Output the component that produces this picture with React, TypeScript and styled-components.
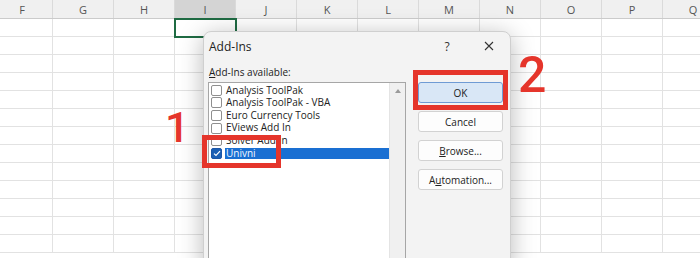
import React from 'react';
import styled, { createGlobalStyle } from 'styled-components';

const GlobalStyle = createGlobalStyle`
  html, body {
    margin: 0;
    padding: 0;
    background: #ffffff;
    overflow: hidden;
  }
  body {
    font-family: 'Open Sans', 'Noto Sans', sans-serif;
  }
`;

const COLUMNS = ['F', 'G', 'H', 'I', 'J', 'K', 'L', 'M', 'N', 'O', 'P', 'Q'];
const ROW_COUNT = 13;
const ADDINS = [
  { name: 'Analysis ToolPak', checked: false },
  { name: 'Analysis ToolPak - VBA', checked: false },
  { name: 'Euro Currency Tools', checked: false },
  { name: 'EViews Add In', checked: false },
  { name: 'Solver Add-in', checked: false },
  { name: 'Univni', checked: true },
];

const Page = styled.div`
  position: relative;
  width: 700px;
  height: 258px;
  overflow: hidden;
  background: #ffffff;
`;

const Sheet = styled.div`
  margin-left: -8px;
  display: flex;
  flex-direction: column;
`;

const HeaderRow = styled.div`
  display: flex;
  height: 19px;
  background: #f0f0f0;
  border-bottom: 1px solid #cbcbcb;
  box-sizing: border-box;
`;

const HeaderCell = styled.div<{ $active?: boolean }>`
  width: 61px;
  flex: none;
  box-sizing: border-box;
  border-right: 1px solid #dadada;
  background: ${(p) => (p.$active ? '#d4d4d4' : 'transparent')};
  display: flex;
  align-items: center;
  justify-content: center;
  font-family: 'Open Sans', sans-serif;
  font-size: 11px;
  color: #555555;
`;

const Row = styled.div`
  display: flex;
  height: 18px;
`;

const Cell = styled.div`
  width: 61px;
  flex: none;
  box-sizing: border-box;
  border-right: 1px solid #e2e2e2;
  border-bottom: 1px solid #e2e2e2;
`;

const SelectedCell = styled.div`
  position: absolute;
  left: 174px;
  top: 18px;
  width: 63px;
  height: 20px;
  box-sizing: border-box;
  border: 2px solid #1f6b43;
`;

const Dialog = styled.div`
  position: absolute;
  left: 203px;
  top: 31px;
  width: 308px;
  height: 240px;
  box-sizing: border-box;
  background: #f3f3f3;
  border: 1px solid #cfcfcf;
  border-radius: 8px 8px 0 0;
  box-shadow: 0 4px 24px rgba(0, 0, 0, 0.28);
  display: flex;
  flex-direction: column;
`;

const TitleBar = styled.div`
  height: 28px;
  flex: none;
  display: flex;
  align-items: center;
  padding: 0 0 0 5px;
`;

const Title = styled.div`
  flex: 1;
  font-size: 12px;
  color: #222222;
`;

const TitleButton = styled.div`
  width: 42px;
  height: 28px;
  display: flex;
  align-items: center;
  justify-content: center;
  font-size: 12px;
  color: #333333;
`;

const Body = styled.div`
  flex: 1;
  display: flex;
  gap: 12px;
  padding: 5px 0 0 4px;
`;

const LeftColumn = styled.div`
  width: 198px;
  display: flex;
  flex-direction: column;
`;

const FieldLabel = styled.div`
  height: 14px;
  line-height: 14px;
  margin: 0 0 3px 1px;
  font-size: 10px;
  color: #222222;
`;

const ListBox = styled.div`
  flex: 1;
  display: flex;
  background: #ffffff;
  border: 1px solid #a6a6a6;
`;

const Items = styled.div`
  flex: 1;
  padding: 1px 0 0 2px;
  display: flex;
  flex-direction: column;
`;

const Item = styled.div`
  height: 12.6px;
  display: flex;
  align-items: center;
  gap: 3px;
`;

const CheckBox = styled.div<{ $checked: boolean }>`
  width: 11px;
  height: 11px;
  box-sizing: border-box;
  flex: none;
  border-radius: 2px;
  border: 1px solid ${(p) => (p.$checked ? '#1b56a8' : '#8f8f8f')};
  background: ${(p) => (p.$checked ? '#1b5fb4' : '#ffffff')};
  display: flex;
  align-items: center;
  justify-content: center;
`;

const ItemText = styled.div<{ $selected: boolean }>`
  flex: 1;
  height: 11.5px;
  line-height: 11.5px;
  padding-left: 1px;
  font-size: 10px;
  white-space: nowrap;
  color: ${(p) => (p.$selected ? '#f2f7ff' : '#222222')};
  background: ${(p) => (p.$selected ? '#1a6fd2' : 'transparent')};
`;

const ScrollTrack = styled.div`
  width: 16px;
  flex: none;
  background: #f0f0f0;
  border-left: 1px solid #e4e4e4;
  display: flex;
  justify-content: center;
  padding-top: 6px;
  box-sizing: border-box;
`;

const RightColumn = styled.div`
  width: 85px;
  display: flex;
  flex-direction: column;
  gap: 8px;
  padding-top: 17px;
`;

const DialogButton = styled.div<{ $primary?: boolean }>`
  height: 21px;
  box-sizing: border-box;
  border-radius: 3px;
  border: 1px solid ${(p) => (p.$primary ? '#6f9bd4' : '#d2d2d2')};
  background: ${(p) => (p.$primary ? '#d9e7f6' : '#fdfdfd')};
  display: flex;
  align-items: center;
  justify-content: center;
  font-size: 10px;
  color: #222222;
`;

const Highlight = styled.div<{ $w: number; $h: number; $x: number; $y: number }>`
  position: absolute;
  left: ${(p) => p.$x}px;
  top: ${(p) => p.$y}px;
  width: ${(p) => p.$w}px;
  height: ${(p) => p.$h}px;
  box-sizing: border-box;
  border: 5px solid #e5352b;
`;

const StepNumber = styled.div<{ $x: number; $y: number; $size: number }>`
  position: absolute;
  left: ${(p) => p.$x}px;
  top: ${(p) => p.$y}px;
  font-family: Roboto, 'Liberation Sans', sans-serif;
  font-weight: 500;
  font-size: ${(p) => p.$size}px;
  line-height: 1;
  color: #e5352b;
`;

const Check = () => (
  <svg width="8" height="7" viewBox="0 0 8 7">
    <path d="M1 3.6 L3 5.5 L7 1.2" fill="none" stroke="#ffffff" strokeWidth="1.2" />
  </svg>
);

const UpArrow = () => (
  <svg width="6" height="4" viewBox="0 0 6 4">
    <path d="M0 4 L3 0 L6 4 Z" fill="#9a9a9a" />
  </svg>
);

const CloseIcon = () => (
  <svg width="10" height="10" viewBox="0 0 10 10">
    <path d="M1 1 L9 9 M9 1 L1 9" stroke="#333333" strokeWidth="1.1" />
  </svg>
);

const App: React.FC = () => {
  return (
    <Page>
      <GlobalStyle />
      <Sheet>
        <HeaderRow>
          {COLUMNS.map((c) => (
            <HeaderCell key={c} $active={c === 'I'}>
              {c}
            </HeaderCell>
          ))}
        </HeaderRow>
        {Array.from({ length: ROW_COUNT }).map((_, r) => (
          <Row key={r}>
            {COLUMNS.map((c) => (
              <Cell key={c} />
            ))}
          </Row>
        ))}
      </Sheet>
      <SelectedCell />

      <Dialog>
        <TitleBar>
          <Title>Add-Ins</Title>
          <TitleButton>?</TitleButton>
          <TitleButton>
            <CloseIcon />
          </TitleButton>
        </TitleBar>
        <Body>
          <LeftColumn>
            <FieldLabel>
              <u>A</u>dd-Ins available:
            </FieldLabel>
            <ListBox>
              <Items>
                {ADDINS.map((a) => (
                  <Item key={a.name}>
                    <CheckBox $checked={a.checked}>{a.checked && <Check />}</CheckBox>
                    <ItemText $selected={a.checked}>{a.name}</ItemText>
                  </Item>
                ))}
              </Items>
              <ScrollTrack>
                <UpArrow />
              </ScrollTrack>
            </ListBox>
          </LeftColumn>
          <RightColumn>
            <DialogButton $primary>OK</DialogButton>
            <DialogButton>Cancel</DialogButton>
            <DialogButton>
              <span>
                <u>B</u>rowse...
              </span>
            </DialogButton>
            <DialogButton>
              <span>
                A<u>u</u>tomation...
              </span>
            </DialogButton>
          </RightColumn>
        </Body>
      </Dialog>

      <Highlight $x={202} $y={135} $w={79} $h={33} />
      <Highlight $x={413} $y={70} $w={95} $h={40} />
      <StepNumber $x={165} $y={106} $size={43}>
        1
      </StepNumber>
      <StepNumber $x={518} $y={50} $size={50}>
        2
      </StepNumber>
    </Page>
  );
};

export default App;
